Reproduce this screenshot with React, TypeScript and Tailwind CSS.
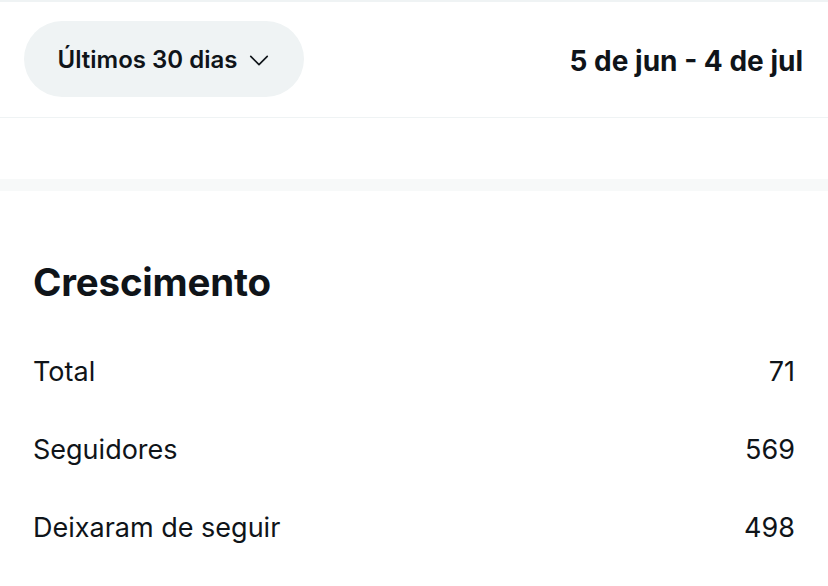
import React from "react";

const rows = [
  { label: "Total", value: "71" },
  { label: "Seguidores", value: "569" },
  { label: "Deixaram de seguir", value: "498" },
];

export default function App() {
  return (
    <div
      className="w-[828px] h-[586px] bg-white text-[#0f1419] overflow-hidden"
      style={{ fontFamily: "Inter, 'Noto Sans', sans-serif" }}
    >
      <div className="h-[2px] bg-[#eff3f4]" />
      <div className="h-[116px] flex items-center justify-between pl-[24px] pr-[25px] border-b border-[#eff3f4]">
        <div className="w-[280px] h-[76px] mt-[-2px] rounded-full bg-[#eff3f4] flex items-center justify-center gap-[11px]">
          <span className="text-[24px] font-semibold mt-[2px]">Últimos 30 dias</span>
          <svg width="22" height="22" viewBox="0 0 24 24" fill="none" stroke="#0f1419" strokeWidth="1.8" strokeLinecap="round" strokeLinejoin="round" className="mt-[2px]">
            <path d="M3 8l9 9 9-9" />
          </svg>
        </div>
        <span className="text-[28px] font-bold mt-[2px]">5 de jun - 4 de jul</span>
      </div>
      <div className="h-[61px]" />
      <div className="h-[12px] bg-[#f7f9f9]" />
      <div className="px-[33px] pt-[68px]">
        <h2 className="text-[38.5px] font-bold leading-[46px] tracking-[-0.2px]">Crescimento</h2>
        <div className="mt-[28px]">
          {rows.map((r) => (
            <div key={r.label} className="h-[78px] flex items-center justify-between text-[27px]">
              <span>{r.label}</span>
              <span>{r.value}</span>
            </div>
          ))}
        </div>
      </div>
    </div>
  );
}
